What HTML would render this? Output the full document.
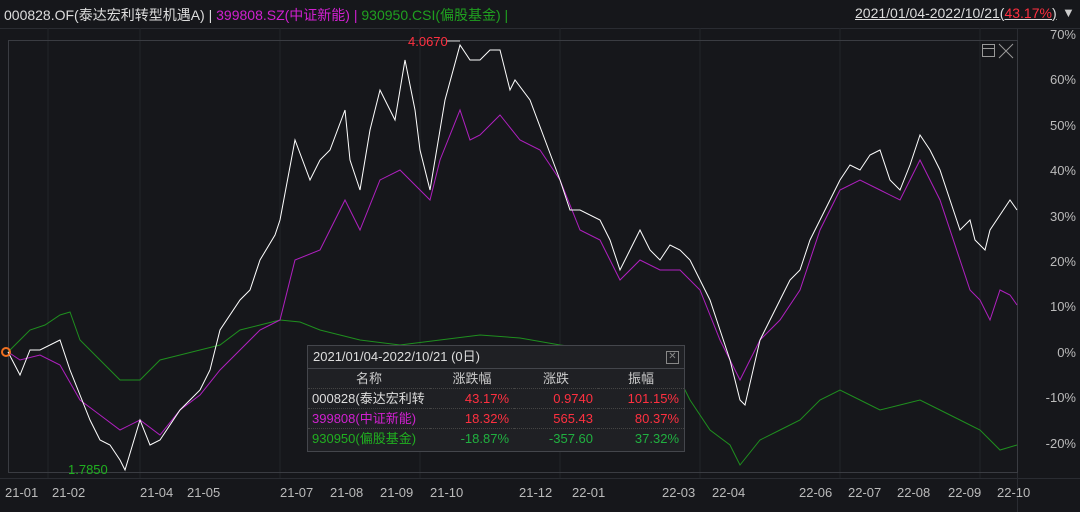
<!DOCTYPE html><html><head><meta charset="utf-8"><style>
body{margin:0;width:1080px;height:512px;background:#16171b;overflow:hidden;font-family:"Liberation Sans","Noto Sans CJK SC",sans-serif;position:relative}
.t{position:absolute;white-space:nowrap}
.hdr{top:5px;left:4px;font-size:14px;color:#ddd}
.yl{right:4px;font-size:13px;color:#bbb;text-align:right}
.xl{top:485px;font-size:13px;color:#bbb}
table{border-collapse:collapse;font-size:13px}
td{padding:0;height:19px;line-height:19px}
</style></head><body>
<div class="t hdr">000828.OF(泰达宏利转型机遇A) | <span style="color:#d020d0">399808.SZ(中证新能) | </span><span style="color:#20a020">930950.CSI(偏股基金) |</span></div>
<div class="t" style="top:5px;left:855px;font-size:14px;color:#ddd;text-decoration:underline">2021/01/04-2022/10/21(<span style="color:#ff3040">43.17%</span>)</div>
<div class="t" style="top:5px;left:1062px;color:#ccc;font-size:13px">▼</div>
<svg class="t" style="left:0;top:0" width="1080" height="512">
<g stroke="#2a2c32" stroke-width="1">
<line x1="0" y1="28.5" x2="1080" y2="28.5"/>
<line x1="1017.5" y1="28" x2="1017.5" y2="512"/>
<line x1="0" y1="478.5" x2="1080" y2="478.5"/>
</g>
<g stroke="#222429" stroke-width="1">
<line x1="48" y1="28" x2="48" y2="478"/><line x1="140" y1="28" x2="140" y2="478"/><line x1="280" y1="28" x2="280" y2="478"/><line x1="420" y1="28" x2="420" y2="478"/><line x1="560" y1="28" x2="560" y2="478"/><line x1="700" y1="28" x2="700" y2="478"/><line x1="840" y1="28" x2="840" y2="478"/><line x1="980" y1="28" x2="980" y2="478"/>
</g>
<rect x="8.5" y="40.5" width="1009" height="432" fill="none" stroke="#3a3c42"/>
<rect x="982.5" y="44.5" width="12" height="12" fill="none" stroke="#999"/><line x1="982" y1="48.5" x2="995" y2="48.5" stroke="#999"/>
<path d="M999 44 L1013 58 M1013 44 L999 58" stroke="#999"/>
<polyline fill="none" stroke="#1f8f1f" stroke-width="1" points="8,352 20,340 30,330 45,325 60,315 70,312 80,340 100,360 120,380 140,380 160,360 180,355 200,350 220,345 240,330 260,325 280,320 300,322 320,330 360,340 400,345 440,340 480,335 520,338 560,345 600,350 640,360 680,380 690,400 710,430 730,445 740,465 760,440 780,430 800,420 820,400 840,390 860,400 880,410 900,405 920,400 940,410 960,420 980,430 1000,450 1017,445"/>
<polyline fill="none" stroke="#b020c0" stroke-width="1" points="8,352 20,360 40,355 60,365 80,400 100,415 120,430 140,420 160,435 180,410 200,395 220,370 240,350 260,330 280,320 295,260 320,250 335,220 345,200 360,230 380,180 400,170 420,190 430,200 440,160 460,110 470,140 480,135 500,115 520,140 540,150 560,180 580,230 600,240 620,280 640,260 660,270 680,270 700,290 720,340 740,380 760,340 780,320 800,290 820,230 840,190 860,180 880,190 900,200 920,160 940,200 960,260 970,290 980,300 990,320 1000,290 1010,295 1017,305"/>
<polyline fill="none" stroke="#ffffff" stroke-width="1" points="8,352 20,375 30,350 40,350 60,340 70,370 80,395 90,420 100,440 110,445 120,460 125,470 140,420 150,445 160,440 180,410 200,390 210,370 220,330 240,300 250,290 260,260 275,235 280,220 295,140 310,180 320,160 330,150 345,110 350,160 360,190 370,130 380,90 395,120 405,60 415,110 420,150 430,190 445,100 460,45 470,60 480,60 490,50 500,50 510,90 515,80 530,100 545,140 560,180 570,210 580,210 600,220 610,240 620,270 630,250 640,230 650,250 660,260 670,245 680,250 690,260 700,280 710,300 720,330 730,360 740,400 745,405 760,340 770,320 780,300 790,280 800,270 810,240 820,220 830,200 840,180 850,165 860,170 870,155 880,150 890,180 900,190 910,165 920,135 930,150 940,170 950,200 960,230 970,220 975,240 985,250 990,230 1000,215 1010,200 1017,210"/>
<line x1="447" y1="41" x2="460" y2="41" stroke="#ccc"/>
<circle cx="6" cy="352" r="4" fill="none" stroke="#f07020" stroke-width="2"/>
</svg>
<div class="t" style="top:34px;left:408px;font-size:13px;color:#ff3040">4.0670</div>
<div class="t" style="top:462px;left:68px;font-size:13px;color:#20b020">1.7850</div>
<div class="t yl" style="top:27px">70%</div><div class="t yl" style="top:72px">60%</div><div class="t yl" style="top:118px">50%</div><div class="t yl" style="top:163px">40%</div><div class="t yl" style="top:209px">30%</div><div class="t yl" style="top:254px">20%</div><div class="t yl" style="top:299px">10%</div><div class="t yl" style="top:345px">0%</div><div class="t yl" style="top:390px">-10%</div><div class="t yl" style="top:436px">-20%</div>
<div class="t xl" style="left:5px">21-01</div><div class="t xl" style="left:52px">21-02</div><div class="t xl" style="left:140px">21-04</div><div class="t xl" style="left:187px">21-05</div><div class="t xl" style="left:280px">21-07</div><div class="t xl" style="left:330px">21-08</div><div class="t xl" style="left:380px">21-09</div><div class="t xl" style="left:430px">21-10</div><div class="t xl" style="left:519px">21-12</div><div class="t xl" style="left:572px">22-01</div><div class="t xl" style="left:662px">22-03</div><div class="t xl" style="left:712px">22-04</div><div class="t xl" style="left:799px">22-06</div><div class="t xl" style="left:848px">22-07</div><div class="t xl" style="left:897px">22-08</div><div class="t xl" style="left:948px">22-09</div><div class="t xl" style="left:997px">22-10</div>
<div class="t" style="left:307px;top:345px;width:376px;height:105px;background:#1f2024;border:1px solid #44464c;overflow:hidden">
<div style="height:22px;line-height:22px;padding-left:5px;font-size:13px;color:#ddd;border-bottom:1px solid #44464c;position:relative">2021/01/04-2022/10/21 (0日)<span style="position:absolute;right:5px;top:5px;width:11px;height:11px;border:1px solid #888;font-size:10px;line-height:10px;text-align:center;color:#888">✕</span></div>
<table style="width:376px">
<tr style="color:#ccc;border-bottom:1px dotted #444"><td style="text-align:center;width:122px">名称</td><td style="text-align:center;width:84px">涨跌幅</td><td style="text-align:center;width:84px">涨跌</td><td style="text-align:center">振幅</td></tr>
<tr style="color:#ff3040;text-align:right;border-bottom:1px dotted #444"><td style="color:#ddd;text-align:left;padding-left:4px;overflow:hidden;max-width:118px;white-space:nowrap">000828(泰达宏利转</td><td style="padding-right:5px">43.17%</td><td style="padding-right:5px">0.9740</td><td style="padding-right:5px">101.15%</td></tr>
<tr style="color:#ff3040;text-align:right;border-bottom:1px dotted #444"><td style="color:#d020d0;text-align:left;padding-left:4px">399808(中证新能)</td><td style="padding-right:5px">18.32%</td><td style="padding-right:5px">565.43</td><td style="padding-right:5px">80.37%</td></tr>
<tr style="color:#20b040;text-align:right"><td style="color:#20b020;text-align:left;padding-left:4px">930950(偏股基金)</td><td style="padding-right:5px">-18.87%</td><td style="padding-right:5px">-357.60</td><td style="padding-right:5px">37.32%</td></tr>
</table></div>
</body></html>
